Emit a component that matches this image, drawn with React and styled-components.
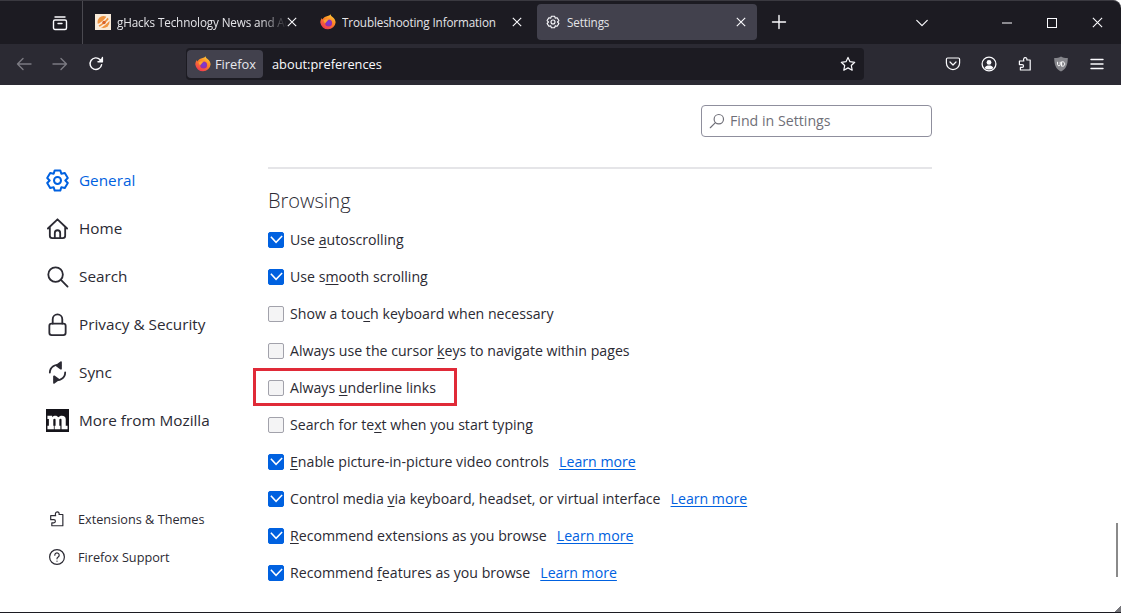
import styled, { createGlobalStyle } from "styled-components";

const GlobalStyle = createGlobalStyle`
  html, body {
    margin: 0;
    padding: 0;
    height: 100%;
    background: #1c1b22;
    overflow: hidden;
  }
  #root {
    height: 100%;
  }
  * {
    box-sizing: border-box;
  }
`;

const Window = styled.div`
  width: 1121px;
  height: 613px;
  display: flex;
  flex-direction: column;
  font-family: "Open Sans", "Noto Sans", sans-serif;
  background: #fff;
  border-bottom: 1px solid #1c1b22;
`;

const TabBar = styled.div`
  height: 44px;
  flex: none;
  display: flex;
  align-items: flex-start;
  background: #1c1b22;
  border-top: 1px solid #3a3940;
  border-top-right-radius: 8px;
  color: #fbfbfe;
`;

const ArchiveSlot = styled.div`
  width: 83px;
  height: 43px;
  padding-right: 14px;
  display: flex;
  align-items: center;
  justify-content: flex-end;
  border-right: 1px solid #4a4950;
  flex: none;
`;

const Tab = styled.div`
  width: ${(p) => p.$width}px;
  height: 36px;
  margin-top: 3px;
  margin-left: ${(p) => p.$gap || 0}px;
  padding: 0 ${(p) => p.$right}px 0 ${(p) => p.$pad}px;
  display: flex;
  align-items: center;
  flex: none;
  border-radius: 4px;
  background: ${(p) => (p.$active ? "#42414d" : "transparent")};
  font-size: 11.7px;
  letter-spacing: -0.13px;
`;

const TabTitle = styled.span`
  flex: 1;
  min-width: 0;
  margin-left: 6px;
  white-space: nowrap;
  overflow: hidden;
  color: #e4e4e8;
  mask-image: ${(p) =>
    p.$fade ? "linear-gradient(to right, #000 84%, transparent 100%)" : "none"};
`;

const NewTab = styled.div`
  margin-left: 14px;
  margin-top: 13px;
  width: 16px;
  height: 16px;
  display: flex;
`;

const TabListSlot = styled.div`
  margin-left: auto;
  margin-top: 15px;
  margin-right: 73px;
  display: flex;
`;

const WindowButtons = styled.div`
  display: flex;
  align-items: center;
  gap: 35px;
  margin-top: 16px;
  margin-right: 18px;
`;

const NavBar = styled.div`
  height: 41px;
  flex: none;
  display: flex;
  align-items: flex-start;
  background: #2b2a33;
  color: #fbfbfe;
`;

const NavButtons = styled.div`
  width: 186px;
  padding: 12px 0 0 16px;
  display: flex;
  gap: 20px;
  flex: none;
`;

const UrlBar = styled.div`
  width: 678px;
  height: 32px;
  margin-top: 4px;
  padding: 0 8px 0 1px;
  display: flex;
  align-items: center;
  flex: none;
  border-radius: 4px;
  background: #1c1b22;
  font-size: 12.8px;
`;

const Identity = styled.div`
  width: 76px;
  height: 28px;
  padding-left: 8px;
  display: flex;
  align-items: center;
  gap: 4px;
  border-radius: 4px;
  background: #42414d;
  color: #e8e8ec;
  flex: none;
`;

const UrlText = styled.span`
  margin-left: 9px;
  flex: 1;
  color: #fbfbfe;
`;

const Tools = styled.div`
  margin-left: auto;
  margin-right: 16px;
  padding-top: 12px;
  display: flex;
  gap: 20px;
`;

const Page = styled.main`
  flex: 1;
  min-height: 0;
  display: flex;
  position: relative;
  background: #fff;
  color: #15141a;
  overflow: hidden;
`;

const Sidebar = styled.nav`
  width: 268px;
  flex: none;
  padding: 71px 0 0 46px;
  display: flex;
  flex-direction: column;
`;

const Category = styled.a`
  height: 48px;
  display: flex;
  align-items: center;
  gap: 10px;
  font-size: 15.3px;
  color: ${(p) => (p.$active ? "#0061e0" : "#2b2a33")};
`;

const SidebarFooter = styled.div`
  margin-top: 56px;
  padding-left: 2px;
  display: flex;
  flex-direction: column;
`;

const FooterLink = styled.a`
  height: 38px;
  display: flex;
  align-items: center;
  gap: 12px;
  font-size: 12.7px;
  color: #2b2a33;
`;

const Content = styled.section`
  width: 664px;
  flex: none;
  padding-top: 20px;
`;

const SearchRow = styled.div`
  display: flex;
  justify-content: flex-end;
`;

const SearchBox = styled.div`
  width: 231px;
  height: 32px;
  padding: 0 0 1px 7px;
  display: flex;
  align-items: center;
  gap: 5px;
  border: 1px solid #8f8f9d;
  border-radius: 4px;
  font-size: 14.2px;
  color: #6f6f78;
`;

const Divider = styled.hr`
  margin: 30px 0 0;
  border: none;
  border-top: 2px solid #e5e5e8;
`;

const Heading = styled.h2`
  margin: 17px 0 0;
  height: 30px;
  font-size: 20px;
  line-height: 30px;
  font-weight: 300;
  color: #2b2a33;
`;

const Options = styled.div`
  margin-top: 5px;
  display: flex;
  flex-direction: column;
`;

const Row = styled.label`
  height: 37px;
  display: flex;
  align-items: center;
  position: relative;
  font-size: 14.15px;
  color: #2b2a33;
`;

const Box = styled.span`
  width: 16px;
  height: 16px;
  margin-right: 6px;
  display: flex;
  align-items: center;
  justify-content: center;
  flex: none;
  border-radius: 2px;
  border: 1px solid ${(p) => (p.$checked ? "#0061e0" : "#a2a2ab")};
  background: ${(p) => (p.$checked ? "#0061e0" : "#f4f4f5")};
`;

const AccessKey = styled.span`
  text-decoration: underline;
  text-underline-offset: 2px;
`;

const LearnMore = styled.a`
  margin-left: 10px;
  color: #0061e0;
  text-decoration: underline;
  text-underline-offset: 2px;
`;

const Highlight = styled.div`
  position: absolute;
  left: -15px;
  top: -1px;
  width: 204px;
  height: 38px;
  border: 3px solid #e02a38;
  pointer-events: none;
`;

const ScrollThumb = styled.div`
  position: absolute;
  right: 3px;
  top: 438px;
  width: 2px;
  height: 54px;
  background: #8a8a8a;
`;

const CornerWedge = styled.div`
  position: absolute;
  right: 0;
  bottom: 0;
  width: 6px;
  height: 6px;
  background: linear-gradient(135deg, transparent 50%, #77777c 50%);
`;

const Glyph = styled.svg`
  flex: none;
  color: ${(p) => p.$color || "inherit"};
  fill: none;
  stroke: currentColor;
  stroke-width: ${(p) => p.$stroke || 1.4};
  stroke-linecap: round;
  stroke-linejoin: round;
`;

const Picture = styled.svg`
  flex: none;
`;

const Icon = ({ size = 16, box = "0 0 16 16", stroke, color, children }) => (
  <Glyph width={size} height={size} viewBox={box} $stroke={stroke} $color={color}>
    {children}
  </Glyph>
);

const GEAR =
  "M9.6 2.2 10.2 4.1 12.2 3.7 13.9 6.6 12.5 8 13.9 9.4 12.2 12.3 10.2 11.9 9.6 13.8 6.4 13.8 5.8 11.9 3.8 12.3 2.1 9.4 3.5 8 2.1 6.6 3.8 3.7 5.8 4.1 6.4 2.2Z";

const Gear = ({ size, stroke, box }) => (
  <Icon size={size} stroke={stroke} box={box}>
    <path d={GEAR} />
    <circle cx="8" cy="8" r="2" />
  </Icon>
);

const Puzzle = ({ size, stroke = 1.2 }) => (
  <Icon size={size} stroke={stroke}>
    <path d="M8.2 1.6c1.3 0 2 1 1.6 2.4h3.4v10H3.4v-2.6h1.8c1.8 0 1.8-2.8 0-2.8H2.4V5h4.4C6.1 3.2 6.9 1.6 8.2 1.6Z" />
  </Icon>
);

const FirefoxLogo = () => (
  <Picture width="16" height="16" viewBox="0 0 16 16">
    <defs>
      <linearGradient id="ffOuter" x1="0.8" y1="0" x2="0.2" y2="1">
        <stop offset="0" stopColor="#ffd23a" />
        <stop offset="0.4" stopColor="#ff8a25" />
        <stop offset="1" stopColor="#ee2f55" />
      </linearGradient>
      <radialGradient id="ffGlobe" cx="0.5" cy="0.45" r="0.6">
        <stop offset="0" stopColor="#6f3fe0" />
        <stop offset="1" stopColor="#a52a9a" />
      </radialGradient>
    </defs>
    <path
      d="M10.6.2c.2 1.4 1 2 2.2 3 1.6 1.4 2.8 3.2 2.8 5.2A7.7 7.7 0 0 1 .3 8.6c0-1.9.7-3.5 1.6-4.6.1.7.3 1.3.7 1.6.3-1.3 1.4-2.4 2.8-2.9 1.9-.6 4.3-1 5.2-2.5Z"
      fill="url(#ffOuter)"
    />
    <circle cx="8.6" cy="9" r="3.5" fill="url(#ffGlobe)" />
    <path d="M3.4 6.6C5 5.2 7 4.9 9 5.3L7.2 6.9 5 9.6Z" fill="#ffa52e" />
  </Picture>
);

const GhacksLogo = () => (
  <Picture width="16" height="16" viewBox="0 0 16 16">
    <rect width="16" height="16" fill="#f8ead9" />
    <circle cx="8.5" cy="8" r="6" fill="#ef9440" />
    <path d="M2 11C6 10 10 6 13 2M4 14C8 12 12 9 15 5" stroke="#fbeee0" strokeWidth="1.3" fill="none" />
    <circle cx="9" cy="8.5" r="1.7" fill="#d9622a" />
  </Picture>
);

const Close = ({ size = 10, stroke = 1.1 }) => (
  <Picture width={size} height={size} viewBox="0 0 10 10">
    <path d="M.8.8 9.2 9.2M9.2.8.8 9.2" stroke="#fbfbfe" strokeWidth={stroke} fill="none" />
  </Picture>
);

const Tick = () => (
  <Picture width="13" height="13" viewBox="0 0 12 12">
    <path d="M.8 3.4 5.6 8.6 11.2 2.8" stroke="#fff" strokeWidth="1.4" fill="none" />
  </Picture>
);

const options = [
  { before: "Use ", key: "a", after: "utoscrolling", checked: true },
  { before: "Use s", key: "m", after: "ooth scrolling", checked: true },
  { before: "Show a tou", key: "c", after: "h keyboard when necessary" },
  { before: "Always use the cursor ", key: "k", after: "eys to navigate within pages" },
  { before: "Always ", key: "u", after: "nderline links", marked: true },
  { before: "Search for te", key: "x", after: "t when you start typing" },
  { before: "", key: "E", after: "nable picture-in-picture video controls", checked: true, more: true },
  { before: "Control media ", key: "v", after: "ia keyboard, headset, or virtual interface", checked: true, more: true },
  { before: "", key: "R", after: "ecommend extensions as you browse", checked: true, more: true },
  { before: "Recommend ", key: "f", after: "eatures as you browse", checked: true, more: true },
];

const App = () => {
  return (
    <>
      <GlobalStyle />
      <Window>
        <TabBar>
          <ArchiveSlot>
            <Icon>
              <rect x="1.5" y="5" width="13" height="9.5" rx="1.5" />
              <path d="M3 2h10M6 8.5h4" />
            </Icon>
          </ArchiveSlot>
          <Tab $width={222} $pad={12} $right={8}>
            <GhacksLogo />
            <TabTitle $fade>gHacks Technology News and Advice</TabTitle>
            <Close />
          </Tab>
          <Tab $width={230} $pad={15} $right={13}>
            <FirefoxLogo />
            <TabTitle>Troubleshooting Information</TabTitle>
            <Close />
          </Tab>
          <Tab $width={220} $pad={8} $right={11} $gap={2} $active>
            <Gear stroke={1.1} />
            <TabTitle>Settings</TabTitle>
            <Close />
          </Tab>
          <NewTab>
            <Icon>
              <path d="M8 1.5v13M1.5 8h13" />
            </Icon>
          </NewTab>
          <TabListSlot>
            <Icon size={14}>
              <path d="M2 5l6 6 6-6" />
            </Icon>
          </TabListSlot>
          <WindowButtons>
            <Picture width="10" height="10" viewBox="0 0 10 10">
              <path d="M0 5h10" stroke="#fbfbfe" strokeWidth="1" />
            </Picture>
            <Picture width="10" height="10" viewBox="0 0 10 10">
              <rect x=".5" y=".5" width="9" height="9" fill="none" stroke="#fbfbfe" />
            </Picture>
            <Close size={11} stroke={1} />
          </WindowButtons>
        </TabBar>
        <NavBar>
          <NavButtons>
            <Icon color="#7b7a82">
              <path d="M15 8H1.5M7 2.5 1.5 8 7 13.5" />
            </Icon>
            <Icon color="#7b7a82">
              <path d="M1 8h13.5M9 2.5 14.5 8 9 13.5" />
            </Icon>
            <Icon>
              <path d="M13.6 8.6A5.8 5.8 0 1 1 12 3.6L14 5.6" />
              <path d="M14.4 1.4v4.4H10" fill="#fbfbfe" />
            </Icon>
          </NavButtons>
          <UrlBar>
            <Identity>
              <FirefoxLogo />
              Firefox
            </Identity>
            <UrlText>about:preferences</UrlText>
            <Icon stroke={1.2}>
              <path d="M8 1.4l2 4.3 4.7.6-3.4 3.2.9 4.7L8 11.9l-4.2 2.3.9-4.7L1.3 6.3 6 5.7Z" />
            </Icon>
          </UrlBar>
          <Tools>
            <Icon stroke={1.2}>
              <path d="M2.6 2h10.8c.7 0 1.2.5 1.2 1.2V7A6.6 6.6 0 0 1 1.4 7V3.2C1.4 2.5 1.9 2 2.6 2Z" />
              <path d="M5 6l3 3 3-3" />
            </Icon>
            <Icon stroke={1.3}>
              <circle cx="8" cy="8" r="6.9" />
              <circle cx="8" cy="6.4" r="2.4" fill="#fbfbfe" stroke="none" />
              <path d="M3.6 12c1-1.8 2.5-2.4 4.4-2.4s3.4.6 4.4 2.4c-2.6 2-6.2 2-8.8 0Z" fill="#fbfbfe" stroke="none" />
            </Icon>
            <Puzzle />
            <Picture width="16" height="16" viewBox="0 0 16 16">
              <path d="M8 .4c1.8 1.2 3.8 1.6 6.8 1.6 0 6.6-1.6 11-6.8 13.6C2.8 13 1.2 8.6 1.2 2 4.2 2 6.2 1.6 8 .4Z" fill="#85858b" />
              <path d="M4.6 5.8v2.8c0 1.6 2.6 1.6 2.6 0V5.8M8.6 5.8v4.4h1c2.8 0 2.8-4.4 0-4.4Z" fill="none" stroke="#fff" strokeWidth="1" />
            </Picture>
            <Icon>
              <path d="M2 3.5h12M2 8h12M2 12.5h12" />
            </Icon>
          </Tools>
        </NavBar>
        <Page>
          <Sidebar>
            <Category $active>
              <Gear size={23} stroke={1.15} box="1.4 1.4 13.2 13.2" />
              General
            </Category>
            <Category>
              <Icon size={23} box="0 0 24 24" stroke={1.9}>
                <path d="M2 12 12 2.4 22 12M4 10v9.5A2.5 2.5 0 0 0 6.5 22h11a2.5 2.5 0 0 0 2.5-2.5V10M9.2 22v-5.4a2.8 2.8 0 0 1 5.6 0V22" />
              </Icon>
              Home
            </Category>
            <Category>
              <Icon size={23} box="0 0 24 24" stroke={1.9}>
                <circle cx="10" cy="10" r="7.6" />
                <path d="M15.6 15.6 22.5 22.5" />
              </Icon>
              Search
            </Category>
            <Category>
              <Icon size={23} box="0 0 24 24" stroke={1.9}>
                <rect x="3.5" y="11" width="17" height="12" rx="2.4" />
                <path d="M7 11V6.5a5 5 0 0 1 10 0V11" />
              </Icon>
              Privacy & Security
            </Category>
            <Category>
              <Icon size={23} box="0 0 24 24" stroke={1.9}>
                <path d="M20 12a8 8 0 0 1-11 7.4M4 12a8 8 0 0 1 11-7.4" />
                <path d="M15.6 1.2v6.8l-4.6-3.4ZM8.4 22.8V16l4.6 3.4Z" fill="currentColor" />
              </Icon>
              Sync
            </Category>
            <Category>
              <Picture width="23" height="23" viewBox="0 0 24 24">
                <rect width="24" height="24" fill="#15141a" />
                <path
                  d="M1.5 7H6.4V8.6C7.4 7.5 8.6 7 9.8 7c1.4 0 2.4.5 3 1.7C13.8 7.5 15.1 7 16.4 7c2.9 0 4.2 1.3 4.2 3.6V17.6H22.5V21H16.2V11.5c0-.9-.4-1.3-1-1.3s-1 .3-1.3.7V17.6H15V21H9V17.6H10V11.5c0-.9-.4-1.3-1-1.3s-1 .3-1.4.7V17.6H8.2V21H1.5V17.6H3V10.4H1.5Z"
                  fill="#fff"
                />
              </Picture>
              More from Mozilla
            </Category>
            <SidebarFooter>
              <FooterLink>
                <Puzzle size={18} stroke={1.05} />
                Extensions & Themes
              </FooterLink>
              <FooterLink>
                <Icon size={18} box="0 0 18 18" stroke={1.2}>
                  <circle cx="9" cy="9" r="7.4" />
                  <path d="M6.8 7.2a2.2 2.2 0 1 1 3.4 1.8c-.8.5-1.2 1-1.2 1.8" />
                  <path d="M9 13.1v.1" />
                </Icon>
                Firefox Support
              </FooterLink>
            </SidebarFooter>
          </Sidebar>
          <Content>
            <SearchRow>
              <SearchBox>
                <Icon size={16} box="0 0 15 15" stroke={1.1} color="#6f6f78">
                  <circle cx="9.2" cy="5.8" r="4.4" />
                  <path d="M6 9 1.2 13.8" />
                </Icon>
                Find in Settings
              </SearchBox>
            </SearchRow>
            <Divider />
            <Heading>Browsing</Heading>
            <Options>
              {options.map((o) => (
                <Row key={o.before + o.key}>
                  {o.marked && <Highlight />}
                  <Box $checked={o.checked}>{o.checked && <Tick />}</Box>
                  <span>
                    {o.before}
                    <AccessKey>{o.key}</AccessKey>
                    {o.after}
                  </span>
                  {o.more && <LearnMore>Learn more</LearnMore>}
                </Row>
              ))}
            </Options>
          </Content>
          <ScrollThumb />
          <CornerWedge />
        </Page>
      </Window>
    </>
  );
};

export default App;
